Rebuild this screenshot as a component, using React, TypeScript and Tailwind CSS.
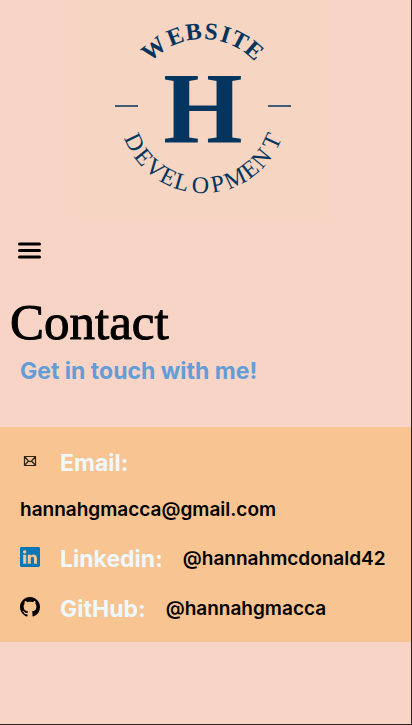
import { BsGithub, BsLinkedin } from "react-icons/bs";

type ArcLetter = { char: string; angle: number };

const topArc: ArcLetter[] = [
  { char: "W", angle: -39 },
  { char: "E", angle: -21 },
  { char: "B", angle: -7 },
  { char: "S", angle: 6 },
  { char: "I", angle: 17 },
  { char: "T", angle: 28 },
  { char: "E", angle: 41 },
];

const bottomArc: ArcLetter[] = [
  { char: "D", angle: 64 },
  { char: "E", angle: 51 },
  { char: "V", angle: 39 },
  { char: "E", angle: 27 },
  { char: "L", angle: 16 },
  { char: "O", angle: 2 },
  { char: "P", angle: -11 },
  { char: "M", angle: -25 },
  { char: "E", angle: -38 },
  { char: "N", angle: -50 },
  { char: "T", angle: -65 },
];

function Logo() {
  return (
    <svg
      viewBox="-125 -109 250 218"
      className="h-[218px] w-[250px] bg-[#f6d6c3] font-['Liberation_Serif',serif]"
      fill="#03355f"
      textAnchor="middle"
      role="img"
      aria-label="H Website Development"
    >
      {topArc.map(({ char, angle }, i) => (
        <text key={i} y="-70" fontSize="24" fontWeight="700" transform={`rotate(${angle})`}>
          {char}
        </text>
      ))}
      <text y="34" fontSize="102" fontWeight="700">H</text>
      <path d="M-88 -3h23M65 -3h23" stroke="#03355f" strokeWidth="1.5" />
      {bottomArc.map(({ char, angle }, i) => (
        <text key={i} y="84" fontSize="24" transform={`rotate(${angle})`}>
          {char}
        </text>
      ))}
    </svg>
  );
}

function Envelope() {
  return (
    <svg viewBox="0 0 20 20" className="-mt-1 size-5" fill="none" stroke="#2c231b" strokeWidth="1.2" aria-hidden="true">
      <path d="M4.5 5.5h11v9h-11zM4.5 5.5l4 4.5q1.5 1.2 3 0l4-4.5M4.5 14.5l4-4.5M15.5 14.5l-4-4.5" />
    </svg>
  );
}

export default function App() {
  return (
    <div className="min-h-screen border-r border-b border-[#29231f] bg-[#f8d4c6] font-[Inter,sans-serif] text-black">
      <header>
        <div className="flex justify-center pr-1.5">
          <Logo />
        </div>
        <button type="button" aria-label="Open menu" className="mt-5 ml-[17px] block">
          <svg viewBox="0 0 25 25" className="size-[25px]" stroke="black" strokeWidth="3" strokeLinecap="round" aria-hidden="true">
            <path d="M2.5 6h20M2.5 12.5h20M2.5 19h20" />
          </svg>
        </button>
      </header>
      <main>
        <h1 className="mt-8 ml-2.5 font-['Liberation_Serif',serif] text-[51px] leading-[54px] [-webkit-text-stroke:1px_black]">Contact</h1>
        <h2 className="mt-1.5 ml-5 text-[23px] leading-8 font-bold text-[#629dd8]">Get in touch with me!</h2>
        <ul className="mt-10 bg-[#f7c492] px-5 pt-3 pb-2">
          <li>
            <div className="flex h-12 items-center gap-5">
              <Envelope />
              <span className="text-[23px] font-bold text-[#f0f8ff]">Email:</span>
            </div>
            <a href="mailto:hannahgmacca@gmail.com" className="flex h-[47px] items-center text-[19px] font-semibold">
              hannahgmacca@gmail.com
            </a>
          </li>
          <li className="flex h-[50px] items-center gap-5">
            <BsLinkedin className="-mt-1 size-5 shrink-0 text-[#0877b5]" aria-hidden="true" />
            <span className="text-[23px] font-bold text-[#f0f8ff]">Linkedin:</span>
            <a href="#linkedin" className="text-[19px] font-semibold">@hannahmcdonald42</a>
          </li>
          <li className="flex h-[50px] items-center gap-5">
            <BsGithub className="-mt-1 size-5 shrink-0" aria-hidden="true" />
            <span className="text-[23px] font-bold text-[#f0f8ff]">GitHub:</span>
            <a href="#github" className="text-[19px] font-semibold">@hannahgmacca</a>
          </li>
        </ul>
      </main>
    </div>
  );
}
